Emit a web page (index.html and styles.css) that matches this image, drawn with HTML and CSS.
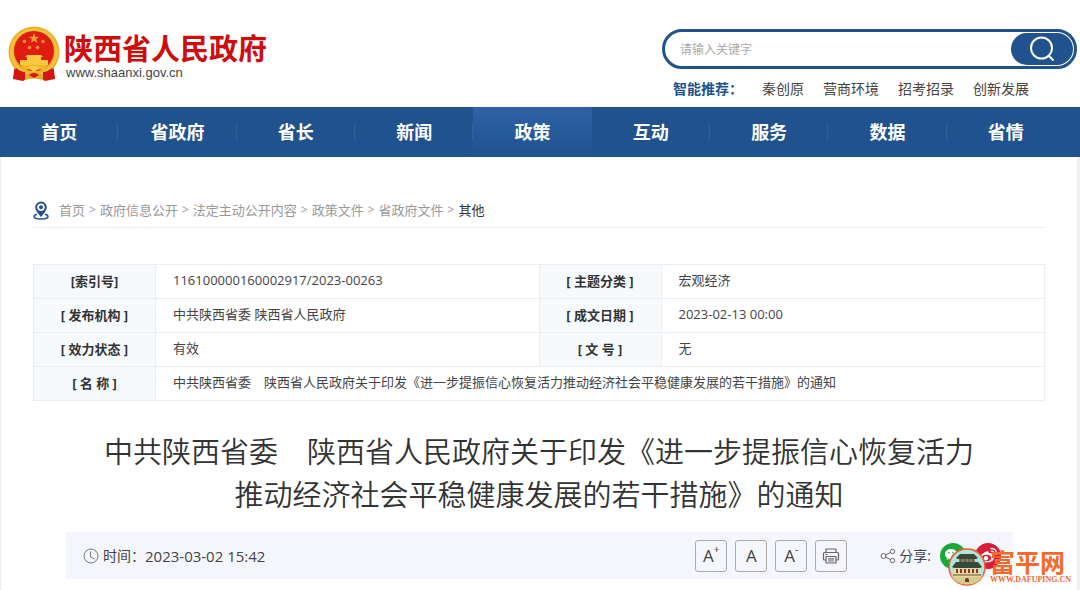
FILE: index.html
```
<!DOCTYPE html>
<html lang="zh-CN">
<head>
<meta charset="utf-8">
<meta name="viewport" content="width=device-width, initial-scale=1">
<title>陕西省人民政府</title>
<link rel="stylesheet" href="styles.css">
</head>
<body>
<header class="header">
  <a class="brand" href="#">
    <svg class="emblem" viewBox="0 0 52 56" aria-hidden="true">
      <path d="M7 36 5 53l10 2 6-4h10l6 4 10-2-2-17z" fill="#d3170f"/>
      <circle cx="26" cy="26" r="25.500" fill="#ecb32b"/>
      <circle cx="26" cy="26" r="22.500" fill="none" stroke="#f3c544" stroke-width="2"/>
      <circle cx="26" cy="25" r="20" fill="#e01b12"/>
      <path d="m26 7 1.300 3.700h4l-3.200 2.400 1.200 3.900-3.300-2.300-3.300 2.300 1.200-3.900-3.200-2.400h4z" fill="#f0a52e"/>
      <g fill="#ee9a2c"><circle cx="16.500" cy="15.500" r="1.800"/><circle cx="21.500" cy="21.500" r="1.800"/><circle cx="29.500" cy="21.500" r="1.800"/><circle cx="35" cy="15.500" r="1.800"/></g>
      <path d="M19 29h14l2 2h-2v3h7v5H12v-5h7v-3h-2z" fill="#f8c83e"/>
      <path d="M12 39h28l-5 5q-5-2-9 1-4-3-9-1z" fill="#f3b62a"/>
      <path d="M20 42q6-4 12 0l-6 4z" fill="#f6cb49"/>
      <path d="M8 42q5 4 9 4v7l-4-2-8 2zM44 42q-5 4-9 4v7l4-2 8 2z" fill="#d3170f"/>
      <path d="M17 49q9-6 18 0v5q-9-3-18 0z" fill="#e9a91f"/>
      <path d="M21 49q5-4 10 0l-5 3z" fill="#d3170f"/>
    </svg>
    <span class="brand-text">
      <span class="brand-name">陕西省人民政府</span>
      <span class="brand-url">www.shaanxi.gov.cn</span>
    </span>
  </a>
  <div class="search-area">
    <form class="search">
      <input class="search-input" type="text" placeholder="请输入关键字" aria-label="请输入关键字">
      <button class="search-button" type="button" aria-label="搜索">
        <svg width="26" height="26" viewBox="0 0 26 26" fill="none" stroke="#fff" stroke-width="2" stroke-linecap="round"><circle cx="12.500" cy="12" r="10.500"/><path d="m20 20 4 4"/></svg>
      </button>
    </form>
    <div class="suggest">
      <span class="suggest-label">智能推荐：</span>
      <a href="#">秦创原</a><a href="#">营商环境</a><a href="#">招考招录</a><a href="#">创新发展</a>
    </div>
  </div>
</header>
<nav class="nav">
  <a href="#">首页</a><a href="#">省政府</a><a href="#">省长</a><a href="#">新闻</a><a class="active" href="#">政策</a><a href="#">互动</a><a href="#">服务</a><a href="#">数据</a><a href="#">省情</a>
</nav>
<main class="page">
  <div class="crumbs">
    <svg class="pin" width="16" height="19" viewBox="0 0 16 19" aria-hidden="true">
      <path d="M4 13.300C2 13.800 1 14.600 1 15.500 1 17 4 18 8 18s7-1 7-2.500c0-.9-1-1.700-3-2.200" fill="none" stroke="#20528e" stroke-width="1.500"/>
      <path d="M8 .5a5.800 5.800 0 0 0-5.800 5.800C2.200 10 8 16 8 16s5.800-6 5.800-9.700A5.800 5.800 0 0 0 8 .5z" fill="#20528e"/>
      <circle cx="8" cy="6.200" r="3.700" fill="#fff"/><circle cx="8" cy="6.200" r="2" fill="#20528e"/>
    </svg>
    <a href="#">首页</a><span>&gt;</span><a href="#">政府信息公开</a><span>&gt;</span><a href="#">法定主动公开内容</a><span>&gt;</span><a href="#">政策文件</a><span>&gt;</span><a href="#">省政府文件</a><span>&gt;</span><a class="current" href="#">其他</a>
  </div>
  <table class="info">
    <colgroup><col class="key-col"><col class="value-col"><col class="key-col"><col class="value-col"></colgroup>
    <tbody>
      <tr><th scope="row">[索引号]</th><td>116100000160002917/2023-00263</td><th scope="row">[ 主题分类 ]</th><td>宏观经济</td></tr>
      <tr><th scope="row">[ 发布机构 ]</th><td>中共陕西省委 陕西省人民政府</td><th scope="row">[ 成文日期 ]</th><td>2023-02-13 00:00</td></tr>
      <tr><th scope="row">[ 效力状态 ]</th><td>有效</td><th scope="row">[ 文 号 ]</th><td>无</td></tr>
      <tr><th scope="row">[ 名 称 ]</th><td colspan="3">中共陕西省委　陕西省人民政府关于印发《进一步提振信心恢复活力推动经济社会平稳健康发展的若干措施》的通知</td></tr>
    </tbody>
  </table>
  <h1 class="title">中共陕西省委　陕西省人民政府关于印发《进一步提振信心恢复活力<br>推动经济社会平稳健康发展的若干措施》的通知</h1>
  <div class="meta">
    <svg class="clock" width="16" height="16" viewBox="0 0 16 16" fill="none" stroke="#777" aria-hidden="true"><circle cx="8" cy="8" r="7"/><path d="M7.500 3.500V9l4 2"/></svg>
    <span>时间：</span><time class="date">2023-03-02 15:42</time>
    <div class="tools">
      <button type="button" aria-label="放大字体">A<sup>+</sup></button>
      <button type="button" aria-label="默认字体">A</button>
      <button type="button" aria-label="缩小字体">A<sup>-</sup></button>
      <button type="button" aria-label="打印">
        <svg width="18" height="18" viewBox="0 0 18 18" fill="none" stroke="#666" stroke-width="1.200" stroke-linejoin="round"><path d="M4 5V2h10v3M4 13H2.500Q1.500 13 1.500 12V6.500q0-1 1-1h13q1 0 1 1V12q0 1-1 1H14M4 9.500h10v6.500H4zM6 11.800h6M6 14h6M3.500 7.500h2"/></svg>
      </button>
    </div>
    <div class="share">
      <svg width="16" height="16" viewBox="0 0 16 16" fill="none" stroke="#666" aria-hidden="true"><circle cx="3.500" cy="8" r="2.500"/><circle cx="12.500" cy="3.500" r="2.200"/><circle cx="12.500" cy="12.500" r="2.200"/><path d="m5.800 6.900 4.700-2.500M5.800 9.100l4.700 2.500"/></svg>
      <span>分享:</span>
      <a class="social" href="#" aria-label="微信">
        <svg width="26" height="26" viewBox="0 0 26 26"><circle cx="13" cy="13" r="13" fill="#18a936"/><path d="M11 6c-3.600 0-6 2.200-6 5 0 1.600.8 3 2.100 3.900L6.500 17l2.400-1.300q1.200.4 2.500.3C11 12 13.500 10 17 10c-.6-2.400-3-4-6-4z" fill="#fff"/><ellipse cx="17" cy="15" rx="4.800" ry="4.200" fill="#fff"/><path d="m19 18 .8 2.500-3-1.500z" fill="#fff"/><g fill="#18a936"><circle cx="9" cy="9.800" r=".8"/><circle cx="13" cy="9.800" r=".8"/><circle cx="15.500" cy="14" r=".7"/><circle cx="18.500" cy="14" r=".7"/></g></svg>
      </a>
      <a class="social" href="#" aria-label="微博">
        <svg width="26" height="26" viewBox="0 0 26 26"><circle cx="13" cy="13" r="13" fill="#d81e3a"/><path d="M11.500 8.500c1.500-.6 2.600 0 2.200 1.800 2.500-.8 4 0 3.300 2 1.600.6 2.400 1.600 2 3-.5 2.400-3.600 4.200-7.300 4.200-4 0-6.700-1.900-6.700-4.500 0-2.700 3.500-5.500 6.500-6.500z" fill="#fff"/><ellipse cx="11.500" cy="15" rx="4.600" ry="3.200" fill="#d81e3a"/><circle cx="11" cy="15.300" r="2.200" fill="#fff"/><path d="M16 5.500c3.500-.5 6 2.300 5.200 5.800M16.500 8.300c1.700-.1 2.500 1 2.200 2.500" fill="none" stroke="#fff" stroke-width="1.400" stroke-linecap="round"/></svg>
      </a>
    </div>
  </div>
  <div class="watermark">
    <svg width="38" height="38" viewBox="0 0 38 38" aria-hidden="true">
      <circle cx="19" cy="19" r="18" fill="#b2e4da" stroke="#ee5a31" stroke-width="1.500"/>
      <path d="M3 27h32q-4 9.500-16 9.500T3 27z" fill="#d8c98c"/>
      <path d="M6 17h26v12H6z" fill="#e8d8a0"/>
      <path d="M12 6h14l4 4-2 1H10l-2-1zM8 14h22l4 5-2 1H6l-2-1z" fill="#354a3c"/>
      <path d="M11 11h16v3H11z" fill="#8e7d5d"/>
      <path d="M13 11v3M17 11v3M21 11v3M25 11v3" stroke="#45513c"/>
      <path d="M9 21v4M13 21v4M17 21v4M21 21v4M25 21v4M29 21v4" stroke="#8b382d" stroke-width="2"/>
      <path d="M5 27h28" stroke="#665239"/>
      <path d="M17 34v-2q0-2 2-2t2 2v2z" fill="#61412d"/>
    </svg>
    <div class="watermark-text"><span class="watermark-name">富平网</span><span class="watermark-url">WWW.DAFUPING.CN</span></div>
  </div>
</main>
</body>
</html>
```
FILE: styles.css
```
* { box-sizing: border-box; }
body {
  margin: 0;
  background: #fff;
  color: #444;
  font: 13px/20px "Open Sans", "Noto Sans CJK SC", sans-serif;
}
a { color: inherit; text-decoration: none; }
svg { display: block; flex: none; }
button { font: inherit; cursor: pointer; }

.header {
  display: flex;
  justify-content: space-between;
  align-items: flex-start;
  padding: 26px 3px 8px 8px;
}
.brand { display: flex; gap: 4px; }
.emblem { width: 52px; height: 56px; }
.brand-text { display: flex; flex-direction: column; padding-top: 3px; }
.brand-name {
  color: #ce0d0d;
  font: 700 29px/36px "Noto Sans CJK SC", sans-serif;
}
.brand-url {
  padding-left: 2px;
  color: #444;
  font: 13px/16px "Liberation Sans", sans-serif;
}
.search-area { width: 415px; padding-top: 3px; }
.search {
  display: flex;
  height: 40px;
  padding: 1px;
  border: 3px solid #20528e;
  border-radius: 20px;
}
.search-input {
  flex: 1;
  min-width: 0;
  padding: 0 14px;
  border: 0;
  outline: 0;
  background: transparent;
  font: 12px/20px "Noto Sans CJK SC", sans-serif;
}
.search-input::placeholder { color: #aaa; }
.search-button {
  display: grid;
  place-items: center;
  width: 62px;
  padding: 0;
  border: 0;
  border-radius: 16px;
  background: #20528e;
}
.suggest {
  display: flex;
  gap: 19px;
  padding: 10px 0 0 11px;
  font-size: 14px;
  white-space: nowrap;
}
.suggest-label { color: #20528e; font-weight: 700; }

.nav {
  display: flex;
  height: 50px;
  padding-right: 15px;
  background: #20528e;
}
.nav a {
  display: flex;
  flex: 1;
  align-items: center;
  justify-content: center;
  color: #fff;
  font-size: 18px;
  font-weight: 700;
  background: linear-gradient(#345f94, #345f94) right center / 1px 18px no-repeat;
}
.nav a:last-child { background: none; }
.nav .active { background: linear-gradient(#2e62a6, #20528e); }

.page {
  position: relative;
  padding: 40px 32px 11px;
  border-left: 1px solid #eee;
  border-right: 3px solid #f0f0f0;
}
.crumbs {
  display: flex;
  align-items: center;
  gap: 4px;
  padding: 3px 0 7px;
  border-bottom: 1px solid #f0f0f0;
  color: #999;
}
.crumbs span { font-size: 12px; }
.pin { margin-right: 6px; }
.current { color: #333; }

.info {
  width: 100%;
  margin-top: 36px;
  border-collapse: collapse;
  table-layout: fixed;
}
.key-col { width: 122px; }
.info th, .info td {
  height: 34px;
  padding: 0 17px 3px;
  border: 1px solid #ebeef0;
  line-height: 20px;
  text-align: left;
}
.info th {
  padding: 0 0 1px;
  background: #f6fafd;
  color: #333;
  text-align: center;
}
.title {
  margin: 29px 0 16px;
  color: #333;
  font-size: 29px;
  font-weight: 350;
  line-height: 43px;
  text-align: center;
}
.meta {
  display: flex;
  align-items: center;
  height: 47px;
  margin: 0 32px 0 33px;
  padding: 0 12px 0 17px;
  background: #f4f6fc;
  font-size: 14px;
}
.clock { margin-right: 4px; }
.date { font-size: 15px; }
.tools { display: flex; gap: 8px; margin-left: auto; }
.tools button {
  display: flex;
  align-items: center;
  justify-content: center;
  width: 32px;
  height: 32px;
  padding: 0;
  border: 1px solid #aaa;
  border-radius: 3px;
  background: transparent;
  color: #444;
  font-size: 17px;
  font-weight: 500;
}
.tools sup { align-self: flex-start; font-size: 10px; line-height: 16px; }
.share { display: flex; align-items: center; gap: 3px; margin-left: 33px; }
.social { margin-left: 6px; }
.watermark {
  position: absolute;
  right: 6px;
  bottom: 4px;
  display: flex;
  align-items: center;
  gap: 4px;
  color: #f4692d;
}
.watermark-text { display: flex; flex-direction: column; }
.watermark-name { font: 700 25px/26px "Noto Sans CJK SC", sans-serif; }
.watermark-url { font: 700 8px/12px "Liberation Serif", serif; }
```
